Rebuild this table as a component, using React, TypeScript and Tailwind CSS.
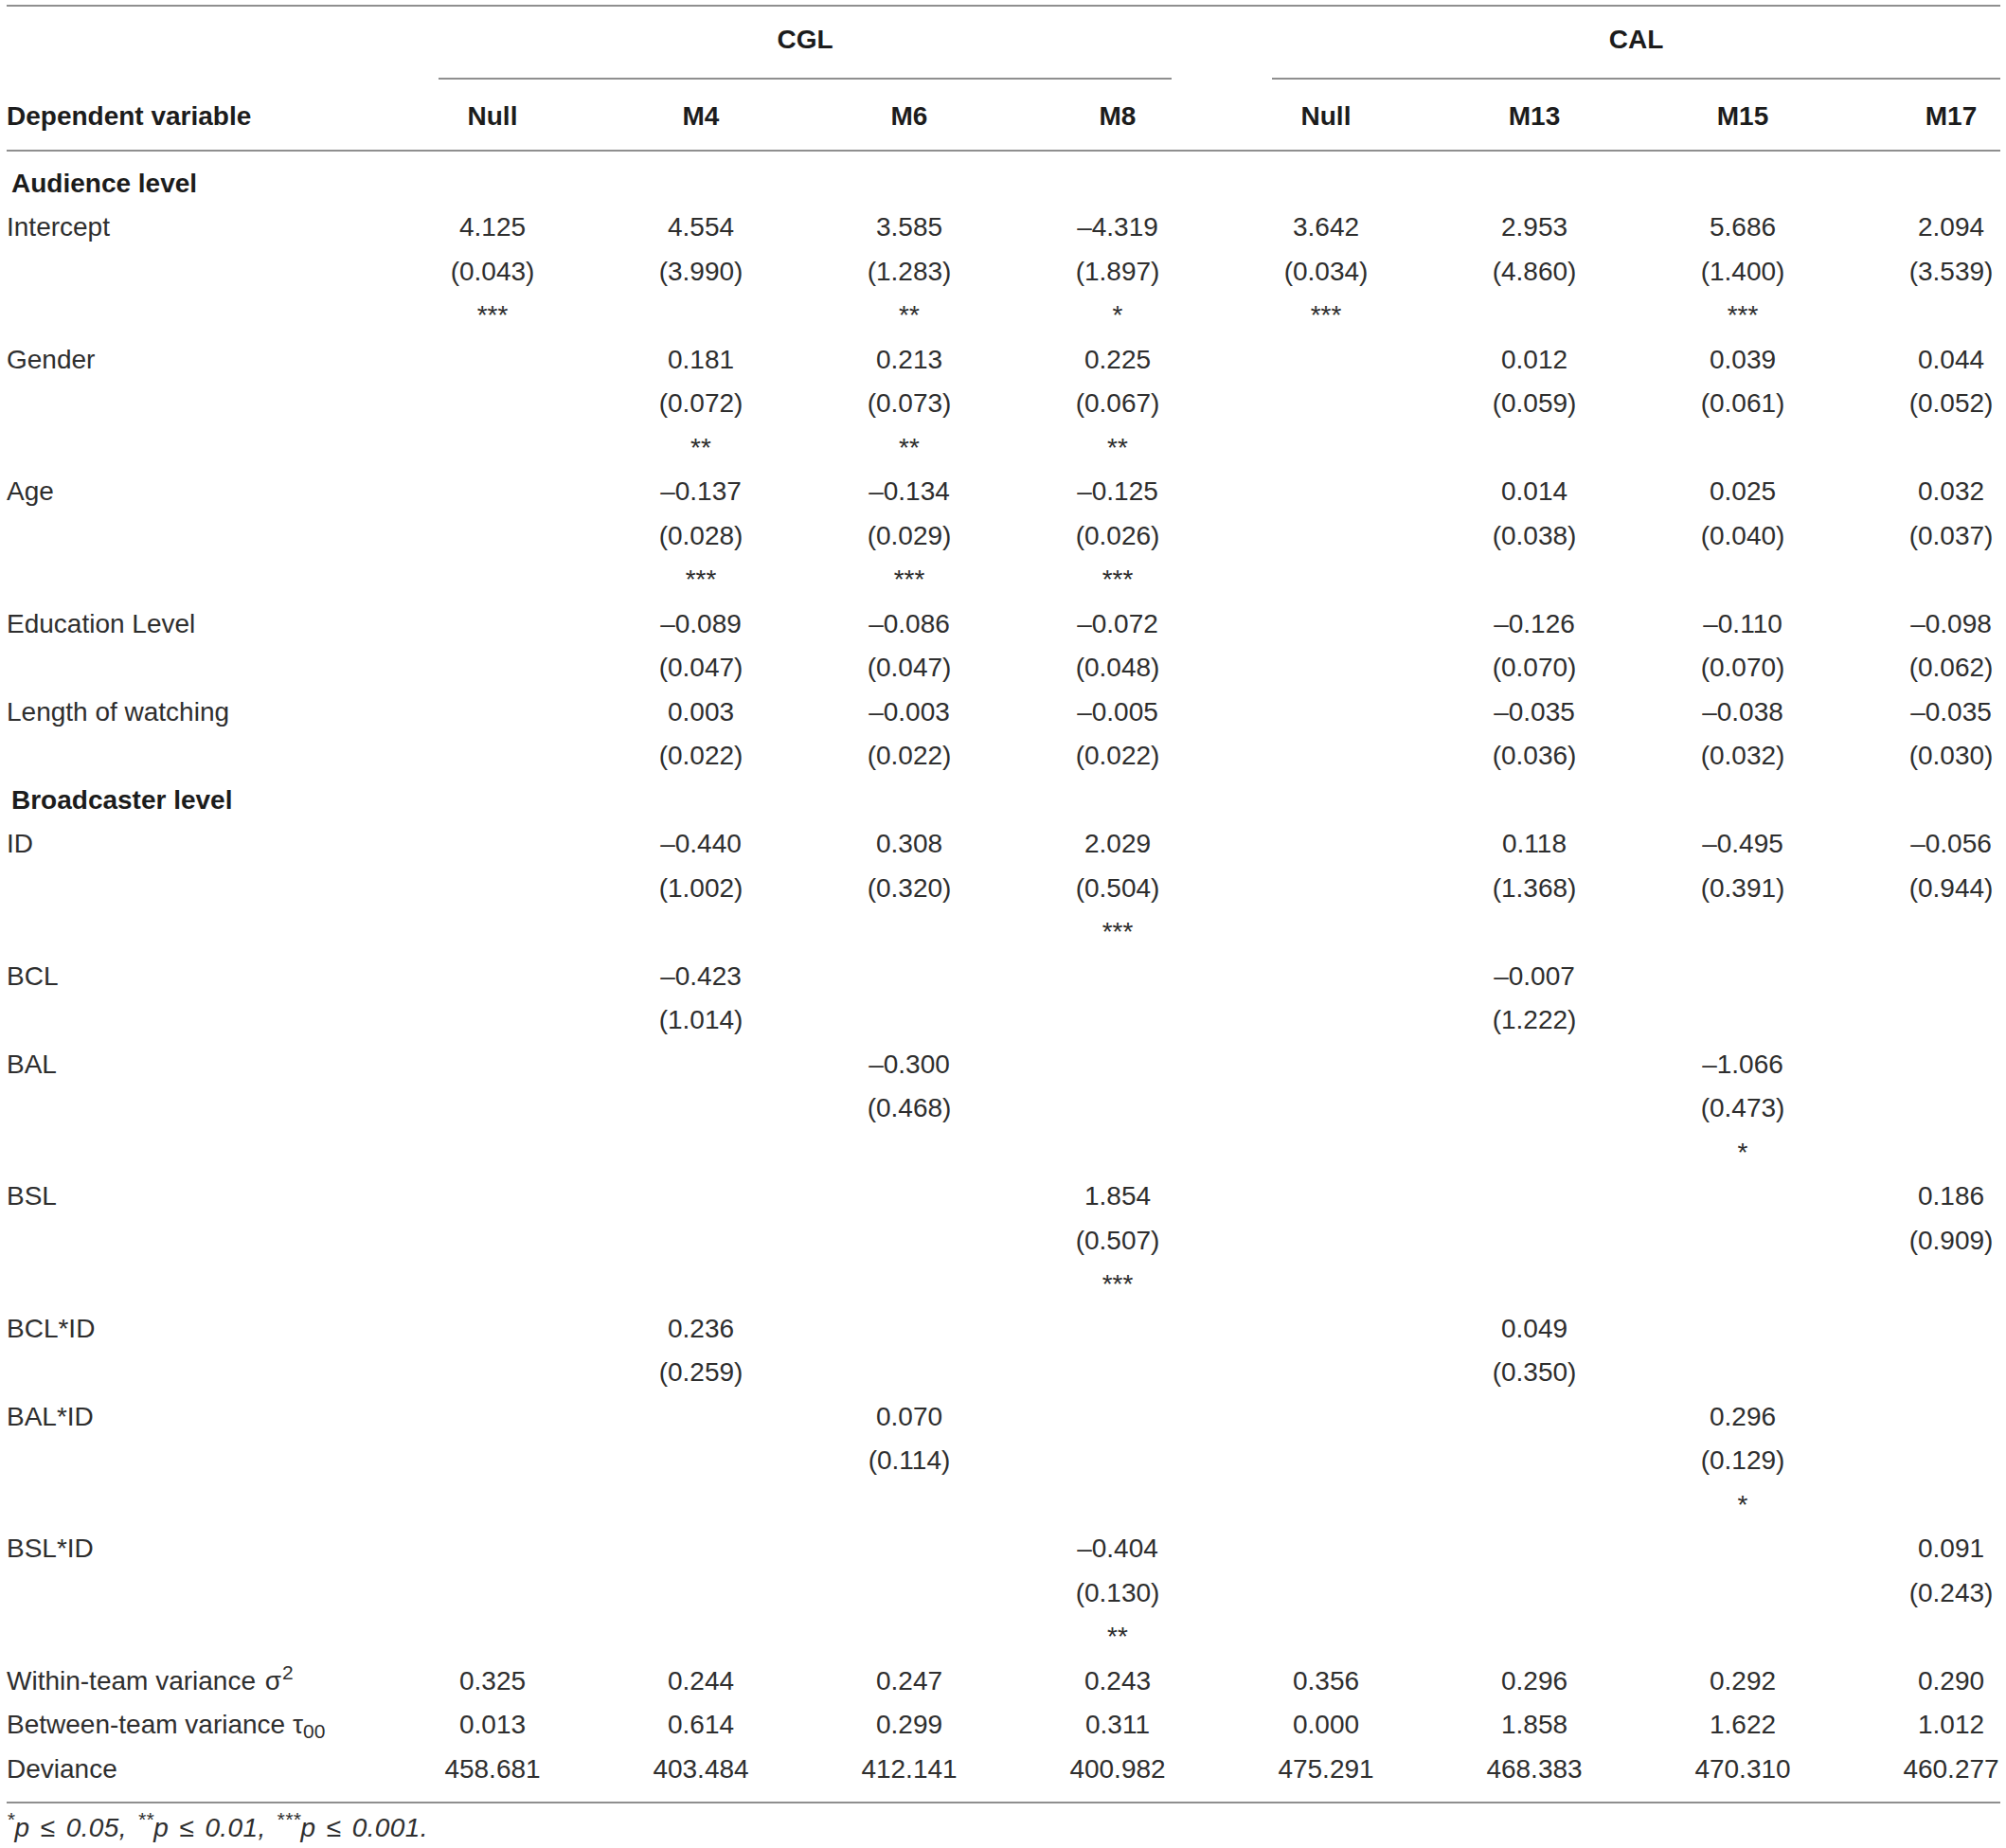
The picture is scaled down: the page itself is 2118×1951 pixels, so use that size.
import React from "react";

type Row = {
  label: React.ReactNode;
  values: string[];
  se?: string[];
  stars?: string[];
};

const audience: Row[] = [
  {
    label: "Intercept",
    values: ["4.125", "4.554", "3.585", "–4.319", "3.642", "2.953", "5.686", "2.094"],
    se: ["(0.043)", "(3.990)", "(1.283)", "(1.897)", "(0.034)", "(4.860)", "(1.400)", "(3.539)"],
    stars: ["***", "", "**", "*", "***", "", "***", ""],
  },
  {
    label: "Gender",
    values: ["", "0.181", "0.213", "0.225", "", "0.012", "0.039", "0.044"],
    se: ["", "(0.072)", "(0.073)", "(0.067)", "", "(0.059)", "(0.061)", "(0.052)"],
    stars: ["", "**", "**", "**", "", "", "", ""],
  },
  {
    label: "Age",
    values: ["", "–0.137", "–0.134", "–0.125", "", "0.014", "0.025", "0.032"],
    se: ["", "(0.028)", "(0.029)", "(0.026)", "", "(0.038)", "(0.040)", "(0.037)"],
    stars: ["", "***", "***", "***", "", "", "", ""],
  },
  {
    label: "Education Level",
    values: ["", "–0.089", "–0.086", "–0.072", "", "–0.126", "–0.110", "–0.098"],
    se: ["", "(0.047)", "(0.047)", "(0.048)", "", "(0.070)", "(0.070)", "(0.062)"],
  },
  {
    label: "Length of watching",
    values: ["", "0.003", "–0.003", "–0.005", "", "–0.035", "–0.038", "–0.035"],
    se: ["", "(0.022)", "(0.022)", "(0.022)", "", "(0.036)", "(0.032)", "(0.030)"],
  },
];

const broadcaster: Row[] = [
  {
    label: "ID",
    values: ["", "–0.440", "0.308", "2.029", "", "0.118", "–0.495", "–0.056"],
    se: ["", "(1.002)", "(0.320)", "(0.504)", "", "(1.368)", "(0.391)", "(0.944)"],
    stars: ["", "", "", "***", "", "", "", ""],
  },
  {
    label: "BCL",
    values: ["", "–0.423", "", "", "", "–0.007", "", ""],
    se: ["", "(1.014)", "", "", "", "(1.222)", "", ""],
  },
  {
    label: "BAL",
    values: ["", "", "–0.300", "", "", "", "–1.066", ""],
    se: ["", "", "(0.468)", "", "", "", "(0.473)", ""],
    stars: ["", "", "", "", "", "", "*", ""],
  },
  {
    label: "BSL",
    values: ["", "", "", "1.854", "", "", "", "0.186"],
    se: ["", "", "", "(0.507)", "", "", "", "(0.909)"],
    stars: ["", "", "", "***", "", "", "", ""],
  },
  {
    label: "BCL*ID",
    values: ["", "0.236", "", "", "", "0.049", "", ""],
    se: ["", "(0.259)", "", "", "", "(0.350)", "", ""],
  },
  {
    label: "BAL*ID",
    values: ["", "", "0.070", "", "", "", "0.296", ""],
    se: ["", "", "(0.114)", "", "", "", "(0.129)", ""],
    stars: ["", "", "", "", "", "", "*", ""],
  },
  {
    label: "BSL*ID",
    values: ["", "", "", "–0.404", "", "", "", "0.091"],
    se: ["", "", "", "(0.130)", "", "", "", "(0.243)"],
    stars: ["", "", "", "**", "", "", "", ""],
  },
];

const summary: Row[] = [
  {
    label: (
      <>
        Within-team variance <span className="ml-[2px]">σ</span>
        <sup className="ml-[1px]">2</sup>
      </>
    ),
    values: ["0.325", "0.244", "0.247", "0.243", "0.356", "0.296", "0.292", "0.290"],
  },
  {
    label: (
      <>
        Between-team variance τ<sub>00</sub>
      </>
    ),
    values: ["0.013", "0.614", "0.299", "0.311", "0.000", "1.858", "1.622", "1.012"],
  },
  {
    label: "Deviance",
    values: ["458.681", "403.484", "412.141", "400.982", "475.291", "468.383", "470.310", "460.277"],
  },
];

const heads = ["Null", "M4", "M6", "M8", "Null", "M13", "M15", "M17"];

function Line({ children }: { children?: React.ReactNode }) {
  return <div className="h-[46.5px] leading-[46.5px] whitespace-nowrap">{children || "\u00a0"}</div>;
}

function DataRow({ row }: { row: Row }) {
  const cols = row.values.map((_, i) => i);
  return (
    <div className="grid grid-cols-[410px_repeat(8,220px)]">
      <div className="pl-[7px]">
        <Line>{row.label}</Line>
      </div>
      {cols.map((i) => (
        <div key={i} className="text-center">
          <Line>{row.values[i]}</Line>
          {row.se && <Line>{row.se[i]}</Line>}
          {row.stars && <Line>{row.stars[i]}</Line>}
        </div>
      ))}
    </div>
  );
}

function Section({ title }: { title: string }) {
  return (
    <div className="pl-[12px] font-bold text-[#1c1c1c]">
      <Line>{title}</Line>
    </div>
  );
}

export default function App() {
  return (
    <div className="w-[2118px] min-h-[1951px] overflow-hidden bg-white font-['Liberation_Sans',Arial,sans-serif] text-[28px] text-[#2e2e2e]">
      <div className="mt-[5px] ml-[7px] h-[2px] w-[2105px] bg-[#8f8f8f]" />
      {/* group header */}
      <div className="grid grid-cols-[410px_repeat(8,220px)] pt-[12px] font-bold text-[#1c1c1c]">
        <div />
        <div className="col-span-4 px-[53px]">
          <div className="border-b-2 border-[#8f8f8f] pb-[16px] text-center">
            <Line>CGL</Line>
          </div>
        </div>
        <div className="col-span-4 pl-[53px] pr-[58px]">
          <div className="border-b-2 border-[#8f8f8f] pb-[16px] text-center">
            <Line>CAL</Line>
          </div>
        </div>
      </div>
      {/* column header */}
      <div className="grid grid-cols-[410px_repeat(8,220px)] pt-[16px] pb-[11.5px] font-bold text-[#1c1c1c]">
        <div className="pl-[7px]">
          <Line>Dependent variable</Line>
        </div>
        {heads.map((h, i) => (
          <div key={i} className="text-center">
            <Line>{h}</Line>
          </div>
        ))}
      </div>
      <div className="ml-[7px] h-[2px] w-[2105px] bg-[#8f8f8f]" />
      <div className="pt-[11px] pb-[10.5px]">
        <Section title="Audience level" />
        {audience.map((r, i) => (
          <DataRow key={i} row={r} />
        ))}
        <Section title="Broadcaster level" />
        {broadcaster.map((r, i) => (
          <DataRow key={i} row={r} />
        ))}
        {summary.map((r, i) => (
          <DataRow key={i} row={r} />
        ))}
      </div>
      <div className="ml-[7px] h-[2px] w-[2105px] bg-[#8f8f8f]" />
      <div className="mt-[3px] pl-[7px] italic tracking-[0.4px] [word-spacing:3px]">
        <Line>
          <sup>*</sup>p ≤ 0.05, <sup>**</sup>p ≤ 0.01, <sup>***</sup>p ≤ 0.001.
        </Line>
      </div>
    </div>
  );
}
